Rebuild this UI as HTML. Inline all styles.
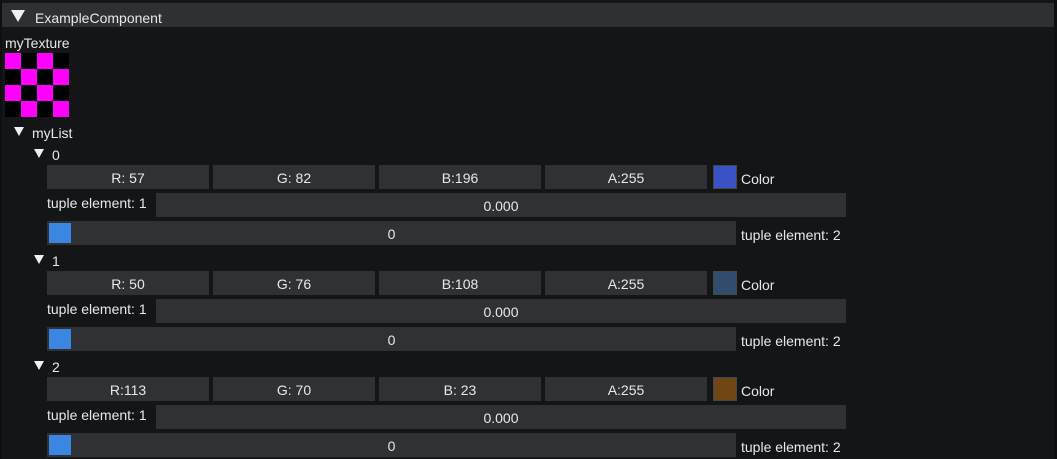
<!DOCTYPE html>
<html><head><meta charset="utf-8"><style>
*{margin:0;padding:0;box-sizing:border-box}
body{width:1057px;height:459px;background:#141517;position:relative;overflow:hidden;font-family:"Liberation Sans","DejaVu Sans",sans-serif;font-size:14px;color:#e8e8e8}
.a{position:absolute}
.f{position:absolute;background:#303134;height:24px;line-height:26px;text-align:center}
.t{position:absolute;line-height:16px;white-space:nowrap;margin-top:2px}
.tri{position:absolute;width:0;height:0;border-left:5px solid transparent;border-right:5px solid transparent;border-top:9px solid #f0f0f0}
.sw{position:absolute;width:24px;height:24px;border:1px solid #45474b}
.g{position:absolute;background:#3b86e2;width:22px;height:20px}
</style></head><body>
<div class="a" style="left:0;top:0;width:2px;height:459px;background:#0e0f10"></div>
<div class="a" style="left:1054px;top:0;width:3px;height:459px;background:#0e0f10"></div>
<div class="a" style="left:2px;top:3px;width:1052px;height:24px;background:#2f3033"></div>
<div class="tri" style="left:11px;top:10px;border-left-width:7px;border-right-width:7px;border-top-width:12px"></div>
<div class="t" style="left:35px;top:8px">ExampleComponent</div>
<div class="t" style="left:5px;top:33px">myTexture</div>
<svg class="a" style="left:5px;top:53px" width="64" height="64">
<rect width="64" height="64" fill="#000"/>
<g fill="#ff00ff"><rect x="0" y="0" width="16" height="16"/><rect x="32" y="0" width="16" height="16"/><rect x="16" y="16" width="16" height="16"/><rect x="48" y="16" width="16" height="16"/><rect x="0" y="32" width="16" height="16"/><rect x="32" y="32" width="16" height="16"/><rect x="16" y="48" width="16" height="16"/><rect x="48" y="48" width="16" height="16"/></g></svg>
<div class="tri" style="left:14px;top:127px"></div>
<div class="t" style="left:32px;top:123px">myList</div>

<div class="tri" style="left:34px;top:149px"></div>
<div class="t" style="left:52px;top:145px">0</div>
<div class="f" style="left:47px;top:165px;width:162px">R: 57</div>
<div class="f" style="left:213px;top:165px;width:162px">G: 82</div>
<div class="f" style="left:379px;top:165px;width:162px">B:196</div>
<div class="f" style="left:545px;top:165px;width:162px">A:255</div>
<div class="sw" style="left:713px;top:165px;background:#3952c4"></div>
<div class="t" style="left:741px;top:169px">Color</div>
<div class="t" style="left:47px;top:193px">tuple element: 1</div>
<div class="f" style="left:156px;top:193px;width:690px">0.000</div>
<div class="f" style="left:47px;top:221px;width:689px">0</div>
<div class="g" style="left:49px;top:223px"></div>
<div class="t" style="left:741px;top:225px">tuple element: 2</div>

<div class="tri" style="left:34px;top:255px"></div>
<div class="t" style="left:52px;top:251px">1</div>
<div class="f" style="left:47px;top:271px;width:162px">R: 50</div>
<div class="f" style="left:213px;top:271px;width:162px">G: 76</div>
<div class="f" style="left:379px;top:271px;width:162px">B:108</div>
<div class="f" style="left:545px;top:271px;width:162px">A:255</div>
<div class="sw" style="left:713px;top:271px;background:#324c6c"></div>
<div class="t" style="left:741px;top:275px">Color</div>
<div class="t" style="left:47px;top:299px">tuple element: 1</div>
<div class="f" style="left:156px;top:299px;width:690px">0.000</div>
<div class="f" style="left:47px;top:327px;width:689px">0</div>
<div class="g" style="left:49px;top:329px"></div>
<div class="t" style="left:741px;top:331px">tuple element: 2</div>

<div class="tri" style="left:34px;top:361px"></div>
<div class="t" style="left:52px;top:357px">2</div>
<div class="f" style="left:47px;top:377px;width:162px">R:113</div>
<div class="f" style="left:213px;top:377px;width:162px">G: 70</div>
<div class="f" style="left:379px;top:377px;width:162px">B: 23</div>
<div class="f" style="left:545px;top:377px;width:162px">A:255</div>
<div class="sw" style="left:713px;top:377px;background:#714617"></div>
<div class="t" style="left:741px;top:381px">Color</div>
<div class="t" style="left:47px;top:405px">tuple element: 1</div>
<div class="f" style="left:156px;top:405px;width:690px">0.000</div>
<div class="f" style="left:47px;top:433px;width:689px">0</div>
<div class="g" style="left:49px;top:435px"></div>
<div class="t" style="left:741px;top:437px">tuple element: 2</div>
</body></html>
